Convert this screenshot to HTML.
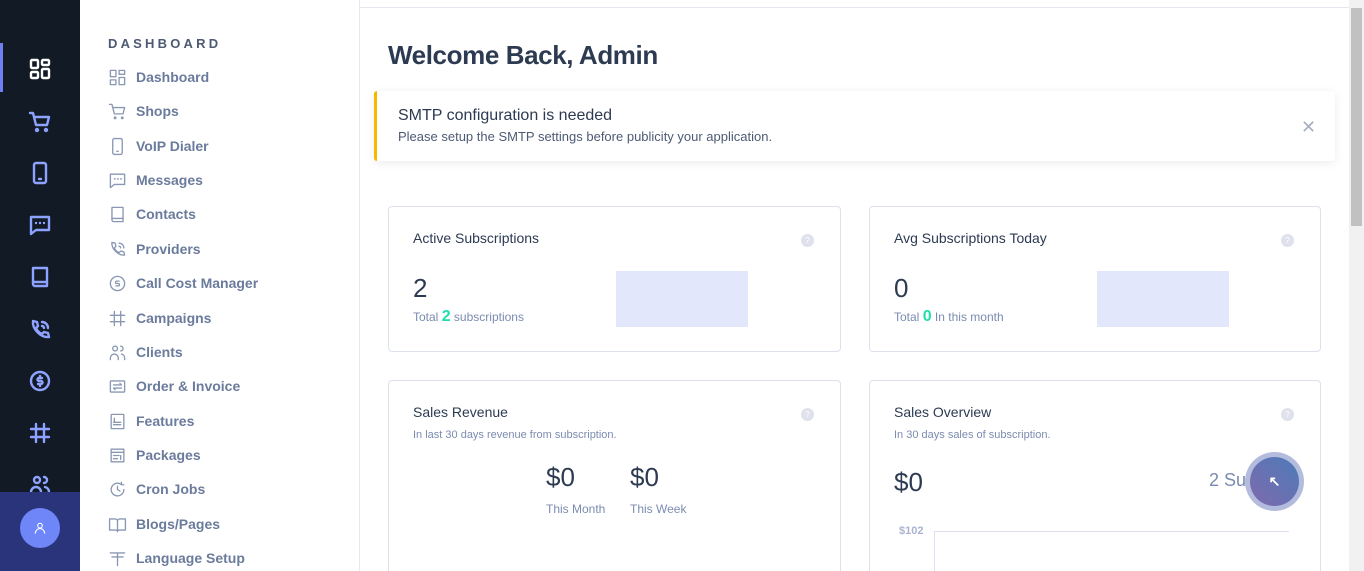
<!DOCTYPE html>
<html style="width:1364px;height:571px;overflow:hidden"><head><meta charset="utf-8"><style>
*{margin:0;padding:0;box-sizing:border-box}
body{width:1364px;height:571px;overflow:hidden;background:#fff;font-family:"Liberation Sans",sans-serif;position:relative}
.rail{position:absolute;left:0;top:0;width:80px;height:571px;background:#121a26}
.rail .act{position:absolute;left:0;top:43px;width:3px;height:49px;background:#6e7ff3}
.rail svg{position:absolute;left:28px;width:24px;height:24px;fill:none;stroke:#8ea2ff;stroke-width:2.4;stroke-linecap:round;stroke-linejoin:round}
.rail .bot{position:absolute;left:0;top:492px;width:80px;height:79px;background:#2a347a}
.rail .av{position:absolute;left:20px;top:508px;width:40px;height:40px;border-radius:50%;background:#6e86f7}
.side{position:absolute;left:80px;top:0;width:280px;height:571px;background:#fff;border-right:1px solid #e6e8f0}
.side h6{position:absolute;left:28px;top:36px;font-size:13px;letter-spacing:3.2px;color:#4d5a73;font-weight:bold}
.it{position:absolute;left:28px;height:20px;display:flex;align-items:center;font-size:14px;font-weight:bold;color:#6b7b9c}
.it svg{width:19px;height:19px;margin-right:9px;fill:none;stroke:#8a98b4;stroke-width:1.7;stroke-linecap:round;stroke-linejoin:round}
.topline{position:absolute;left:360px;top:7px;width:989px;height:1px;background:#e6e8f0}
.scroll{position:absolute;left:1349px;top:0;width:15px;height:571px;background:#f1f1f1}
.scroll div{position:absolute;left:2px;top:8px;width:11px;height:218px;background:#c1c1c1}
h1{position:absolute;left:388px;top:40px;font-size:26px;color:#2c3a52;font-weight:bold;letter-spacing:-0.4px}
.alert{position:absolute;left:374px;top:91px;width:961px;height:70px;background:#fff;border-left:3px solid #f5b800;border-radius:3px;box-shadow:0 2px 10px rgba(0,0,0,.08)}
.alert .t{position:absolute;left:21px;top:16px;font-size:16px;color:#2c3a52}
.alert .s{position:absolute;left:21px;top:38px;font-size:13px;color:#4d5a73}
.alert .x{position:absolute;left:924px;top:26px;font-size:18px;color:#a8b0c0}
.card{position:absolute;border:1px solid #dde1ee;border-radius:4px;background:#fff}
.card .h{position:absolute;left:24px;top:23px;font-size:14px;color:#2c3a52}
.card .q{position:absolute;right:26px;top:27px;width:13px;height:13px;border-radius:50%;background:#dfe2ec;color:#fff;font-size:8px;text-align:center;line-height:13px}
.card .sub{position:absolute;left:24px;top:48px;font-size:11px;color:#7b8bb0}
.big{position:absolute;font-size:26px;color:#2c3a52}
.small{position:absolute;font-size:12px;color:#7b8bb0}
.green{color:#1ee0ac;font-weight:bold;font-size:16px}
.bar{position:absolute;width:132px;height:56px;background:#e2e7fc}
</style></head><body>
<div class="rail">
<div class="act"></div>
<svg style="top:57px;stroke:#fff" viewBox="0 0 24 24"><rect x="3" y="3" width="7" height="8" rx="1"/><rect x="14" y="3" width="7" height="5" rx="1"/><rect x="3" y="15" width="7" height="6" rx="1"/><rect x="14" y="12" width="7" height="9" rx="1"/></svg>
<svg style="top:110px" viewBox="0 0 24 24"><path d="M2 3h3l3 12h11l2-8H6"/><circle cx="9" cy="20" r="1"/><circle cx="18" cy="20" r="1"/></svg>
<svg style="top:161px" viewBox="0 0 24 24"><rect x="6" y="2" width="12" height="20" rx="2"/><path d="M11 18h2"/></svg>
<svg style="top:213px" viewBox="0 0 24 24"><path d="M3 4h18v13H8l-5 4z"/><path d="M8 10h0M12 10h0M16 10h0"/></svg>
<svg style="top:265px" viewBox="0 0 24 24"><path d="M5 3h14v18H7a2 2 0 01-2-2z"/><path d="M5 17h14"/></svg>
<svg style="top:318px" viewBox="0 0 24 24"><path d="M5 3l4 1 1 4-2 2a11 11 0 006 6l2-2 4 1 1 4c-8 1-17-8-16-16z"/><path d="M14 4a6 6 0 016 6M14 8a2 2 0 012 2"/></svg>
<svg style="top:369px" viewBox="0 0 24 24"><circle cx="12" cy="12" r="9"/><path d="M14 9h-3a1.5 1.5 0 000 3h2a1.5 1.5 0 010 3h-3M12 7v2M12 15v2"/></svg>
<svg style="top:421px" viewBox="0 0 24 24"><path d="M8 3v18M16 3v18M3 8h18M3 16h18"/></svg>
<svg style="top:473px" viewBox="0 0 24 24"><circle cx="9" cy="7" r="3"/><path d="M3 21v-2a5 5 0 0110 0v2M16 4a3 3 0 010 6M17 14a5 5 0 014 5v2"/></svg>
<div class="bot"></div>
<div class="av"><svg style="left:13px;top:13px;width:14px;height:14px;stroke:#fff;stroke-width:1.8" viewBox="0 0 24 24"><circle cx="12" cy="8" r="4"/><path d="M4 21a8 8 0 0116 0"/></svg></div>
</div>
<div class="side">
<h6>DASHBOARD</h6>
<div class="it" style="top:67px"><svg viewBox="0 0 24 24"><rect x="3" y="3" width="7" height="8"/><rect x="14" y="3" width="7" height="5"/><rect x="3" y="15" width="7" height="6"/><rect x="14" y="12" width="7" height="9"/></svg>Dashboard</div>
<div class="it" style="top:101px"><svg viewBox="0 0 24 24"><path d="M2 3h3l3 12h11l2-8H6"/><circle cx="9" cy="20" r="1"/><circle cx="18" cy="20" r="1"/></svg>Shops</div>
<div class="it" style="top:136px"><svg viewBox="0 0 24 24"><rect x="6" y="2" width="12" height="20" rx="2"/><path d="M11 18h2"/></svg>VoIP Dialer</div>
<div class="it" style="top:170px"><svg viewBox="0 0 24 24"><path d="M3 4h18v13H8l-5 4z"/><path d="M8 10h1M12 10h1M16 10h1"/></svg>Messages</div>
<div class="it" style="top:204px"><svg viewBox="0 0 24 24"><path d="M5 3h14v18H7a2 2 0 01-2-2z"/><path d="M5 17h14"/></svg>Contacts</div>
<div class="it" style="top:239px"><svg viewBox="0 0 24 24"><path d="M5 3l4 1 1 4-2 2a11 11 0 006 6l2-2 4 1 1 4c-8 1-17-8-16-16z"/><path d="M14 4a6 6 0 016 6M14 8a2 2 0 012 2"/></svg>Providers</div>
<div class="it" style="top:273px"><svg viewBox="0 0 24 24"><circle cx="12" cy="12" r="9"/><path d="M14 9h-3a1.5 1.5 0 000 3h2a1.5 1.5 0 010 3h-3"/></svg>Call Cost Manager</div>
<div class="it" style="top:308px"><svg viewBox="0 0 24 24"><path d="M8 3v18M16 3v18M3 8h18M3 16h18"/></svg>Campaigns</div>
<div class="it" style="top:342px"><svg viewBox="0 0 24 24"><circle cx="9" cy="7" r="3"/><path d="M3 21v-2a5 5 0 0110 0v2M16 4a3 3 0 010 6M17 14a5 5 0 014 5v2"/></svg>Clients</div>
<div class="it" style="top:376px"><svg viewBox="0 0 24 24"><rect x="3" y="5" width="18" height="14" rx="1"/><path d="M7 10h10l-2-2M17 14H7l2 2"/></svg>Order &amp; Invoice</div>
<div class="it" style="top:411px"><svg viewBox="0 0 24 24"><rect x="4" y="3" width="16" height="18" rx="1"/><path d="M8 8v4M7 13h9M7 16h9"/></svg>Features</div>
<div class="it" style="top:445px"><svg viewBox="0 0 24 24"><rect x="4" y="4" width="16" height="16"/><path d="M4 8h16M7 12h7M7 16h5M16 12v5"/></svg>Packages</div>
<div class="it" style="top:479px"><svg viewBox="0 0 24 24"><path d="M20 12a8 8 0 11-3-6.2M17 3v3h3M12 8v4l3 2"/></svg>Cron Jobs</div>
<div class="it" style="top:514px"><svg viewBox="0 0 24 24"><path d="M2 5h7a3 3 0 013 3v13a2 2 0 00-2-2H2zM22 5h-7a3 3 0 00-3 3v13a2 2 0 012-2h8z"/></svg>Blogs/Pages</div>
<div class="it" style="top:548px"><svg viewBox="0 0 24 24"><path d="M3 5h18M5 10h14M12 5v16"/></svg>Language Setup</div>
</div>
<div class="topline"></div>
<h1>Welcome Back, Admin</h1>
<div class="alert"><div class="t">SMTP configuration is needed</div><div class="s">Please setup the SMTP settings before publicity your application.</div><div class="x">✕</div></div>

<div class="card" style="left:388px;top:206px;width:453px;height:146px">
<div class="h">Active Subscriptions</div><div class="q">?</div>
<div class="big" style="left:24px;top:66px">2</div>
<div class="small" style="left:24px;top:101px">Total <span class="green">2</span> subscriptions</div>
<div class="bar" style="left:227px;top:64px"></div>
</div>
<div class="card" style="left:869px;top:206px;width:452px;height:146px">
<div class="h">Avg Subscriptions Today</div><div class="q">?</div>
<div class="big" style="left:24px;top:66px">0</div>
<div class="small" style="left:24px;top:101px">Total <span class="green">0</span> In this month</div>
<div class="bar" style="left:227px;top:64px"></div>
</div>
<div class="card" style="left:388px;top:380px;width:453px;height:191px;border-bottom:none;border-radius:4px 4px 0 0">
<div class="h">Sales Revenue</div><div class="q">?</div>
<div class="sub">In last 30 days revenue from subscription.</div>
<div class="big" style="left:157px;top:81px">$0</div>
<div class="small" style="left:157px;top:121px">This Month</div>
<div class="big" style="left:241px;top:81px">$0</div>
<div class="small" style="left:241px;top:121px">This Week</div>
</div>
<div class="card" style="left:869px;top:380px;width:452px;height:191px;border-bottom:none;border-radius:4px 4px 0 0">
<div class="h">Sales Overview</div><div class="q">?</div>
<div class="sub">In 30 days sales of subscription.</div>
<div class="big" style="left:24px;top:86px">$0</div>
<div style="position:absolute;left:339px;top:89px;font-size:18px;color:#7b8bb0">2 Sub</div>
<div style="position:absolute;left:29px;top:144px;font-size:11px;font-weight:bold;color:#aab4d0">$102</div>
<div style="position:absolute;left:64px;top:150px;width:355px;height:1px;background:#dde1ee"></div>
<div style="position:absolute;left:64px;top:150px;width:1px;height:60px;background:#dde1ee"></div>
</div>
<div style="position:absolute;left:1245px;top:452px;width:59px;height:59px;border-radius:50%;background:#b3bcdc"></div>
<div style="position:absolute;left:1250px;top:457px;width:49px;height:49px;border-radius:50%;background:linear-gradient(225deg,#4d7ab8,#7f6aae);color:#fff;font-size:14px;font-weight:bold;text-align:center;line-height:49px">↖</div>
<div class="scroll"><div></div></div>
</body></html>
